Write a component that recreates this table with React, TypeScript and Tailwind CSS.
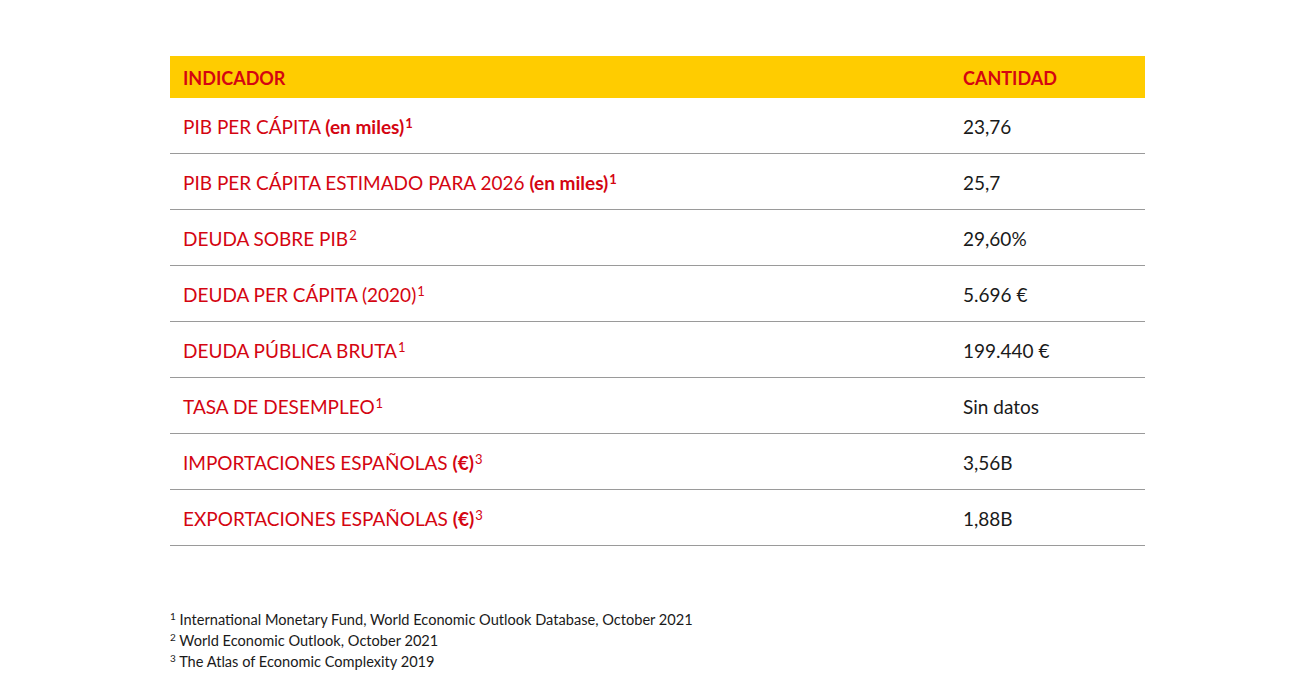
import React from 'react';

interface Row {
  label: string;
  extra?: string;
  note: string;
  boldNote?: boolean;
  value: string;
}

const rows: Row[] = [
  { label: 'PIB PER CÁPITA ', extra: '(en miles)', note: '1', boldNote: true, value: '23,76' },
  { label: 'PIB PER CÁPITA ESTIMADO PARA 2026 ', extra: '(en miles)', note: '1', boldNote: true, value: '25,7' },
  { label: 'DEUDA SOBRE PIB', note: '2', value: '29,60%' },
  { label: 'DEUDA PER CÁPITA (2020)', note: '1', value: '5.696 €' },
  { label: 'DEUDA PÚBLICA BRUTA', note: '1', value: '199.440 €' },
  { label: 'TASA DE DESEMPLEO', note: '1', value: 'Sin datos' },
  { label: 'IMPORTACIONES ESPAÑOLAS ', extra: '(€)', note: '3', value: '3,56B' },
  { label: 'EXPORTACIONES ESPAÑOLAS ', extra: '(€)', note: '3', value: '1,88B' },
];

const notes = [
  { n: '1', text: 'International Monetary Fund, World Economic Outlook Database, October 2021' },
  { n: '2', text: 'World Economic Outlook, October 2021' },
  { n: '3', text: 'The Atlas of Economic Complexity 2019' },
];

export default function App() {
  return (
    <div className="min-h-[686px] w-full bg-white font-['Lato',sans-serif]">
      <div className="mx-auto w-[975px] pt-[56px] translate-x-[1px]">
        {/* Таблица */}
        <div className="grid grid-cols-[793px_182px]">
          <div className="flex h-[42px] items-center bg-[#ffcc00] pl-[13px] pt-[3px] text-[18px] font-bold text-[#d40511]">
            INDICADOR
          </div>
          <div className="flex h-[42px] items-center bg-[#ffcc00] pt-[3px] text-[18px] font-bold text-[#d40511]">
            CANTIDAD
          </div>
          {rows.map((row) => (
            <React.Fragment key={row.label}>
              <div className="flex h-[56px] items-center border-b border-[#9a9a9a] pl-[13px] pt-[4px] text-[19px] text-[#d40511]">
                <span>
                  {row.label}
                  {row.extra && <b className="font-bold">{row.extra}</b>}
                  <sup className={row.boldNote ? 'ml-[1px] text-[13px] font-bold' : 'ml-[1px] text-[13px]'}>{row.note}</sup>
                </span>
              </div>
              <div className="flex h-[56px] items-center border-b border-[#9a9a9a] pt-[4px] text-[19px] text-[#1a1a1a]">
                {row.value}
              </div>
            </React.Fragment>
          ))}
        </div>

        {/* Notas */}
        <div className="mt-[63px] flex flex-col text-[14.6px] leading-[21px] text-[#1a1a1a]">
          {notes.map((note) => (
            <p key={note.n}>
              <sup className="text-[10px]">{note.n}</sup> {note.text}
            </p>
          ))}
        </div>
      </div>
    </div>
  );
}
